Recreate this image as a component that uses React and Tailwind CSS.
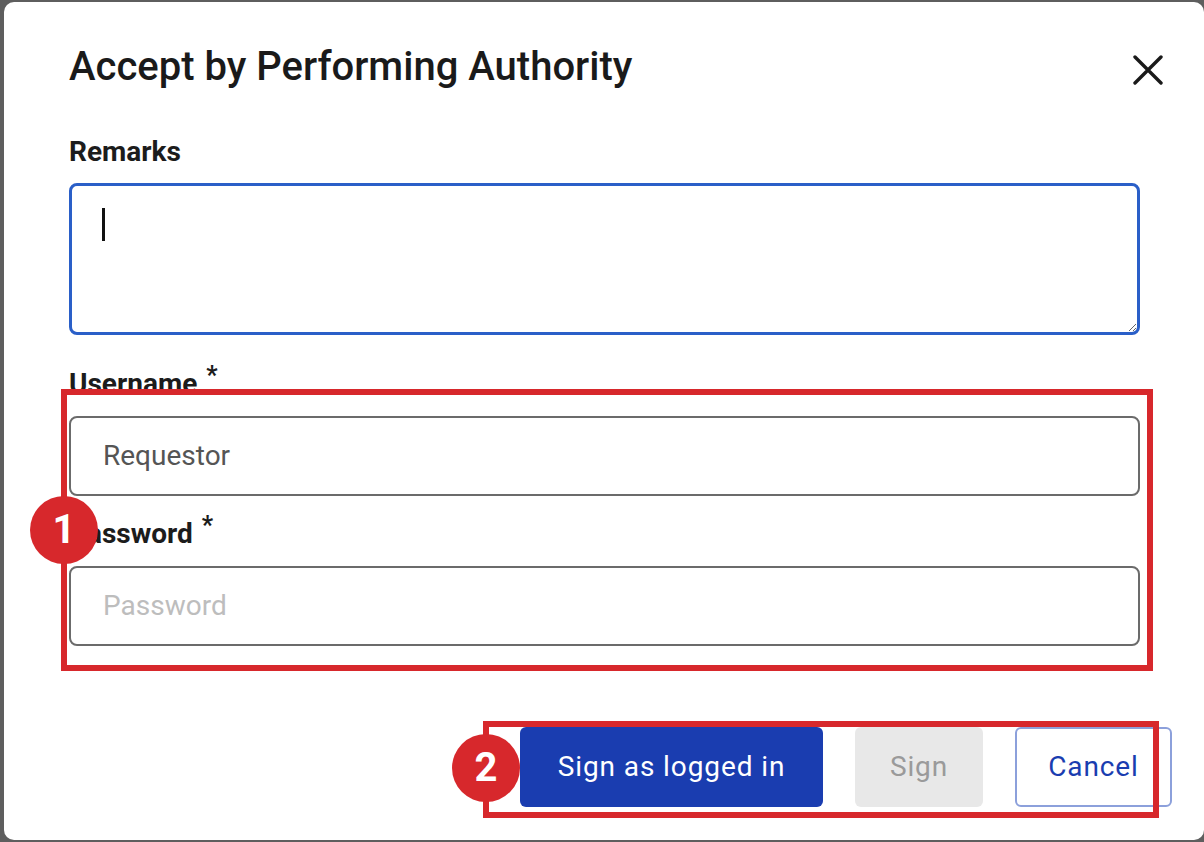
import React from 'react';

const font = { fontFamily: 'Roboto, "Noto Sans", sans-serif' };

const CloseIcon = () => (
  <svg width="30" height="30" viewBox="0 0 30 30" fill="none" stroke="#1a1a1a" strokeWidth="3.4" strokeLinecap="round">
    <path d="M2 2L28 28M28 2L2 28" />
  </svg>
);

const Label = ({ children, required }) => (
  <div className="text-[28px] leading-[32px] font-bold text-[#1c1c1c] mb-[15px]">
    {children}
    {required && <span className="relative -top-[9px] ml-[9px] text-[25px] font-bold">*</span>}
  </div>
);

export default function App() {
  return (
    <div className="relative w-[1204px] h-[842px] overflow-hidden bg-[#5e5e5e] pt-[2px] pl-[4px]" style={font}>
      <div className="w-[1200px] h-[838px] rounded-[10px] bg-white flex flex-col">
        {/* Header */}
        <div className="flex items-start justify-between pt-[41px] pl-[65px] pr-[41px]">
          <h1 className="text-[40px] leading-[48px] font-medium text-[#1a1a1a]">Accept by Performing Authority</h1>
          <button className="mt-[12px] p-0">
            <CloseIcon />
          </button>
        </div>

        {/* Form */}
        <div className="px-[65px]">
          <div className="mt-[45px]">
            <Label>Remarks</Label>
            <div className="relative">
              <textarea
                className="block w-[1071px] h-[152px] rounded-[8px] border-[3px] border-[#2a5fc8] outline-none resize-y px-[30px] py-[20px] text-[28px]"
                readOnly
              />
              <span className="absolute left-[33px] top-[25px] w-[2.5px] h-[33px] bg-[#111]" />
            </div>
          </div>

          <div className="mt-[33px]">
            <Label required>Username</Label>
            <div className="w-[1071px] h-[80px] rounded-[8px] border-2 border-[#6b6b6b] flex items-center px-[32px] text-[28px] text-[#555]">
              Requestor
            </div>
          </div>

          <div className="mt-[22px]">
            <Label required>Password</Label>
            <div className="w-[1071px] h-[80px] rounded-[8px] border-2 border-[#6b6b6b] flex items-center px-[32px] text-[28px] text-[#bdbdbd]">
              Password
            </div>
          </div>
        </div>

        {/* Footer */}
        <div className="mt-[81px] flex justify-end gap-[32px] pr-[32px]">
          <button className="w-[303px] h-[80px] rounded-[6px] bg-[#1a3db0] text-white text-[28px] tracking-[0.9px]">
            Sign as logged in
          </button>
          <button className="w-[128px] h-[80px] rounded-[6px] bg-[#e8e8e8] text-[#9a9a9a] text-[28px] tracking-[0.9px]">
            Sign
          </button>
          <button className="w-[157px] h-[80px] rounded-[6px] border-2 border-[#8ca0db] bg-white text-[#1a3db0] text-[28px] tracking-[0.9px]">
            Cancel
          </button>
        </div>
      </div>

      {/* Annotations */}
      <div className="absolute left-[61px] top-[389px] w-[1092px] h-[282px] border-[6px] border-[#d7282c]" />
      <div className="absolute left-[483px] top-[721px] w-[676px] h-[97px] border-[6px] border-[#d7282c]" />
      <div className="absolute left-[30px] top-[496px] w-[68px] h-[68px] rounded-full bg-[#d7282c] flex items-center justify-center text-white text-[40px] font-bold">
        1
      </div>
      <div className="absolute left-[452px] top-[734px] w-[68px] h-[68px] rounded-full bg-[#d7282c] flex items-center justify-center text-white text-[40px] font-bold">
        2
      </div>
    </div>
  );
}
